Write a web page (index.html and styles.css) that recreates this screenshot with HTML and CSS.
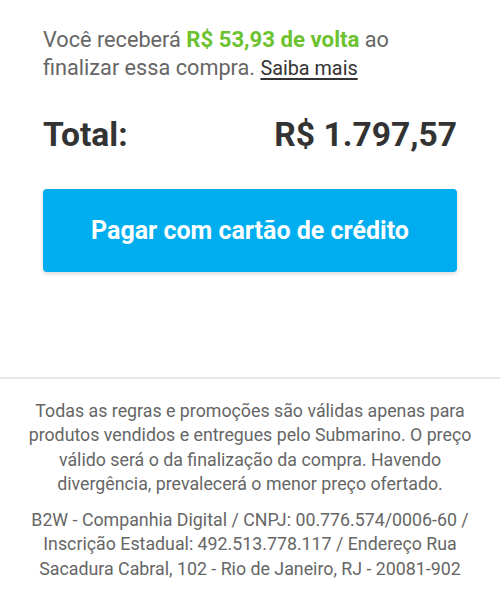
FILE: index.html
```html
<!DOCTYPE html>
<html lang="pt-BR">
<head>
<meta charset="utf-8">
<link rel="stylesheet" href="styles.css">
</head>
<body>
<main class="summary">
  <p class="cashback">Você receberá <strong class="green">R$ 53,93 de volta</strong> ao finalizar essa compra. <a class="more" href="#">Saiba mais</a></p>
  <div class="total">
    <span>Total:</span>
    <span>R$ 1.797,57</span>
  </div>
  <button class="pay">Pagar com cartão de crédito</button>
</main>
<footer class="footer">
  <p>Todas as regras e promoções são válidas apenas para produtos vendidos e entregues pelo Submarino. O preço válido será o da finalização da compra. Havendo divergência, prevalecerá o menor preço ofertado.</p>
  <p>B2W - Companhia Digital / CNPJ: 00.776.574/0006-60 / Inscrição Estadual: 492.513.778.117 / Endereço Rua Sacadura Cabral, 102 - Rio de Janeiro, RJ - 20081-902</p>
</footer>
</body>
</html>
```
FILE: styles.css
```css
html, body { margin: 0; padding: 0; background: #fff; }
body { font-family: Roboto, "Noto Sans", sans-serif; width: 500px; }
.summary { padding: 26px 43px 0; height: 377px; box-sizing: border-box; }
.cashback { margin: 0; font-size: 21.7px; line-height: 28px; color: #666; }
.green { color: #6cc22f; font-weight: 700; font-size: 22.2px; line-height: 1; }
.more { color: #333; font-size: 19.8px; line-height: 1; text-decoration: underline; text-underline-offset: 3px; text-decoration-thickness: 1.5px; }
.total { display: flex; justify-content: space-between; margin-top: 33px; font-size: 33.6px; font-weight: 700; color: #333; line-height: 40px; }
.pay { display: block; width: 100%; height: 83px; margin-top: 34px; border: 0; border-radius: 4px; background: #00aeef; color: #fff; font-family: inherit; font-size: 25px; font-weight: 700; box-shadow: 0 2px 4px rgba(0,0,0,0.15); }
.footer { border-top: 2px solid #e6e6e6; padding: 20px 22px 0; text-align: center; color: #666; font-size: 17.8px; line-height: 24.3px; }
.footer p { margin: 0 0 12px; }
```
